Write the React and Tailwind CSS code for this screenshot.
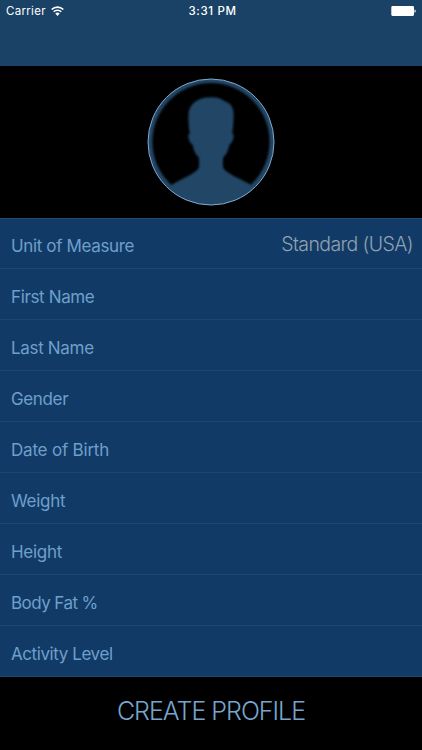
import React from "react";

const fields = [
  { label: "Unit of Measure", value: "Standard (USA)", tracking: "tracking-[-0.36px]" },
  { label: "First Name", tracking: "tracking-[-0.36px]" },
  { label: "Last Name", tracking: "tracking-[-0.32px]" },
  { label: "Gender", tracking: "tracking-[-0.36px]" },
  { label: "Date of Birth", tracking: "tracking-[-0.2px]" },
  { label: "Weight", tracking: "tracking-[-0.3px]" },
  { label: "Height", tracking: "tracking-[-0.3px]" },
  { label: "Body Fat %", tracking: "tracking-[-0.56px]" },
  { label: "Activity Level", tracking: "tracking-[-0.42px]" },
];

function WifiIcon() {
  return (
    <svg viewBox="0 0 13 10" className="ml-[5px] h-[10px] w-[13px]" fill="none">
      <path d="M0.7 3.5a8.2 8.2 0 0 1 11.6 0" stroke="#fff" strokeWidth="1.7" />
      <path d="M2.7 5.8a5.3 5.3 0 0 1 7.6 0" stroke="#fff" strokeWidth="1.6" />
      <path d="M4.3 7.6a3.1 3.1 0 0 1 4.4 0L6.5 9.9z" fill="#fff" />
    </svg>
  );
}

function BatteryIcon() {
  return (
    <svg viewBox="0 0 25 10" className="h-[10px] w-[25px]">
      <rect x="0.3" y="0.1" width="22.7" height="9.8" rx="1.3" fill="#fff" />
      <path d="M23.5 3.4c1.7.3 1.7 3.1 0 3.4z" fill="#fff" />
    </svg>
  );
}

function Avatar() {
  return (
    <svg viewBox="0 0 128 128" className="h-32 w-32">
      <defs>
        <clipPath id="disc">
          <circle cx="64" cy="64" r="63" />
        </clipPath>
        <filter id="soft" x="-10%" y="-10%" width="120%" height="120%">
          <feGaussianBlur stdDeviation="1" />
        </filter>
      </defs>
      <g clipPath="url(#disc)">
        <rect width="128" height="128" fill="#234666" />
        <circle cx="64" cy="63.7" r="58.6" fill="#000" filter="url(#soft)" />
        <path
          d="M64 19.2C70 19 74.5 20.5 77.5 23.3C84 25 87 30 86.6 38C86.5 44 86 50 85.2 55.5C87.2 56 86.8 59 86 61.5C85.2 64 84 66 82.5 66.5C81.5 72 79.5 76.5 76.2 79.5C75.8 84 75.5 88.5 77 91C81 96 94 101 104 107L112 132H16L24.5 107C34 101 47 96 51 91C52.5 88.5 52.2 84 51.8 79.5C48.5 76.5 46.5 72 45.5 66.5C43.5 66 42.8 64 42 61.5C41 59 40.8 56 42.8 55.5C41.7 50 41.4 44 41.4 38C41.4 26 50 19.2 64 19.2Z"
          fill="#234666"
          filter="url(#soft)"
        />
      </g>
      <circle cx="64" cy="64" r="63" fill="none" stroke="#7da9cf" strokeWidth="1" />
    </svg>
  );
}

export default function App() {
  return (
    <div className="flex h-[750px] w-[422px] flex-col overflow-hidden bg-black font-['Inter',sans-serif]">
      <header className="h-[65.5px] bg-[#194266] text-white">
        <div className="grid h-[22px] grid-cols-3 items-center">
          <div className="flex items-center pl-[6px]">
            <span className="pt-[2px] text-[11.5px] tracking-[0.3px]">Carrier</span>
            <WifiIcon />
          </div>
          <span className="pt-[2px] pl-[3px] text-center text-[11.5px] font-medium tracking-[0.65px]">
            3:31 PM
          </span>
          <div className="flex justify-end pr-[6px]">
            <BatteryIcon />
          </div>
        </div>
      </header>

      <section className="flex h-[152.5px] justify-center pt-[12.5px]">
        <Avatar />
      </section>

      <ul className="bg-[#113b66] shadow-[inset_0_1px_0_#214b70]">
        {fields.map((f) => (
          <li
            key={f.label}
            className="flex h-[51px] items-center justify-between border-b border-[#1c4870] pr-[9px] pl-[11px]"
          >
            <span className={`pt-[8px] text-[17px] text-[#6f9fcc] ${f.tracking}`}>
              {f.label}
            </span>
            {f.value && (
              <span className="pt-[4px] text-[19.5px] font-light tracking-[-0.6px] text-[#92a1b0]">
                {f.value}
              </span>
            )}
          </li>
        ))}
      </ul>

      <button className="flex flex-1 items-center justify-center pb-[4px] text-[25px] font-light tracking-[-1px] text-[#78a5cd]">
        CREATE PROFILE
      </button>
    </div>
  );
}
